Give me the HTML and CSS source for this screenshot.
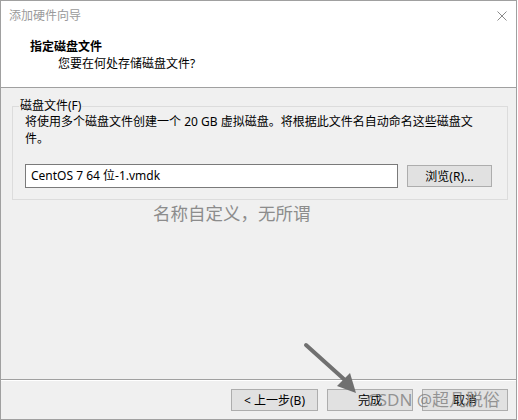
FILE: index.html
```html
<!DOCTYPE html>
<html lang="zh-CN">
<head>
<meta charset="utf-8">
<title>添加硬件向导</title>
<link rel="stylesheet" href="styles.css">
</head>
<body>
<div class="window">
  <div class="header">
    <div class="titlebar">
      <span class="title">添加硬件向导</span>
      <svg class="close" width="10" height="10" viewBox="0 0 10 10"><path d="M0.5 0.5 L9.5 9.5 M9.5 0.5 L0.5 9.5" stroke="#8a8a8a" stroke-width="1" fill="none"/></svg>
    </div>
    <div class="heading">指定磁盘文件</div>
    <div class="subheading">您要在何处存储磁盘文件?</div>
  </div>
  <div class="main">
    <div class="group">
      <div class="legend">磁盘文件(F)</div>
      <div class="desc">将使用多个磁盘文件创建一个<span class="latin"> 20 GB </span>虚拟磁盘。将根据此文件名自动命名这些磁盘文<br>件。</div>
      <div class="filerow">
        <div class="input">CentOS 7 64 位-1.vmdk</div>
        <div class="btn browse">浏览(R)...</div>
      </div>
    </div>
  </div>
  <div class="sep"></div>
  <div class="footer">
    <div class="btn back">&lt; 上一步(B)</div>
    <div class="btn finish">完成</div>
    <div class="btn cancel">取消</div>
  </div>

  <div class="note">名称自定义，无所谓</div>
  <svg class="arrow" width="70" height="60" viewBox="0 0 70 60">
    <line x1="5" y1="5" x2="45" y2="41" stroke="#707070" stroke-width="4" stroke-linecap="round"/>
    <polygon points="55,53 36,46 49,33" fill="#707070"/>
  </svg>
  <div class="watermark">CSDN @超凡脱俗</div>
</div>
</body>
</html>
```
FILE: styles.css
```css
* { box-sizing: border-box; }
html, body { margin: 0; padding: 0; background: #ffffff; }
body {
  font-family: "Noto Sans", "Noto Sans CJK SC", sans-serif;
  font-size: 12px;
  color: #000;
}
.window {
  position: relative;
  width: 517px;
  height: 420px;
  border: 1px solid #a0a0a0;
  background: #f0f0f0;
  display: flex;
  flex-direction: column;
}
.header {
  height: 87px;
  background: #ffffff;
  border-bottom: 1px solid #a0a0a0;
  flex: none;
}
.titlebar {
  height: 29px;
  display: flex;
  align-items: center;
  justify-content: space-between;
  padding: 0 9px 0 8px;
}
.title {
  color: #9a9a9a;
  line-height: 17px;
}
.close { display: block; margin-top: 1px; }
.heading {
  margin-top: 8px;
  padding-left: 29px;
  font-weight: bold;
  line-height: 17px;
}
.subheading {
  padding-left: 57px;
  line-height: 17px;
}
.main {
  flex: 1;
  padding: 18px 9px 0 11px;
}
.group {
  width: 496px;
  border: 1px solid #dcdcdc;
  padding: 0 12px 11px 12px;
  display: flex;
  flex-direction: column;
  align-items: flex-start;
}
.legend {
  margin: -8px 0 0 -6px;
  padding: 0 1px;
  height: 14px;
  line-height: 14px;
  background: #f0f0f0;
  white-space: nowrap;
}
.desc {
  line-height: 17px;
  white-space: nowrap;
}
.latin {
  font-family: "Noto Sans", sans-serif;
  white-space: pre;
}
.filerow {
  align-self: stretch;
  margin-top: 17px;
  display: flex;
  align-items: center;
  gap: 9px;
}
.input {
  width: 373px;
  height: 24px;
  border: 1px solid #7a7a7a;
  background: #ffffff;
  padding: 0 5px;
  line-height: 22px;
}
.btn {
  height: 22px;
  border: 1px solid #adadad;
  background: #e1e1e1;
  display: flex;
  align-items: center;
  justify-content: center;
  line-height: 17px;
}
.browse { width: 85px; }
.sep {
  flex: none;
  height: 2px;
  border-top: 1px solid #a0a0a0;
  background: #ffffff;
}
.footer {
  flex: none;
  height: 38px;
  display: flex;
  justify-content: flex-end;
  gap: 9px;
  padding: 8px 8px 0 0;
}
.back { width: 87px; }
.finish { width: 86px; }
.cancel { width: 86px; }
.note {
  position: absolute;
  left: 152px;
  top: 200px;
  font-size: 17.5px;
  line-height: 24px;
  color: #8c8c8c;
  font-family: "Noto Sans CJK SC", sans-serif;
}
.arrow {
  position: absolute;
  left: 300px;
  top: 339px;
}
.watermark {
  position: absolute;
  left: 366px;
  top: 387px;
  font-size: 17px;
  line-height: 24px;
  color: rgba(120, 120, 120, 0.75);
  font-family: "Noto Sans", "Noto Sans CJK SC", sans-serif;
  white-space: nowrap;
}
```
